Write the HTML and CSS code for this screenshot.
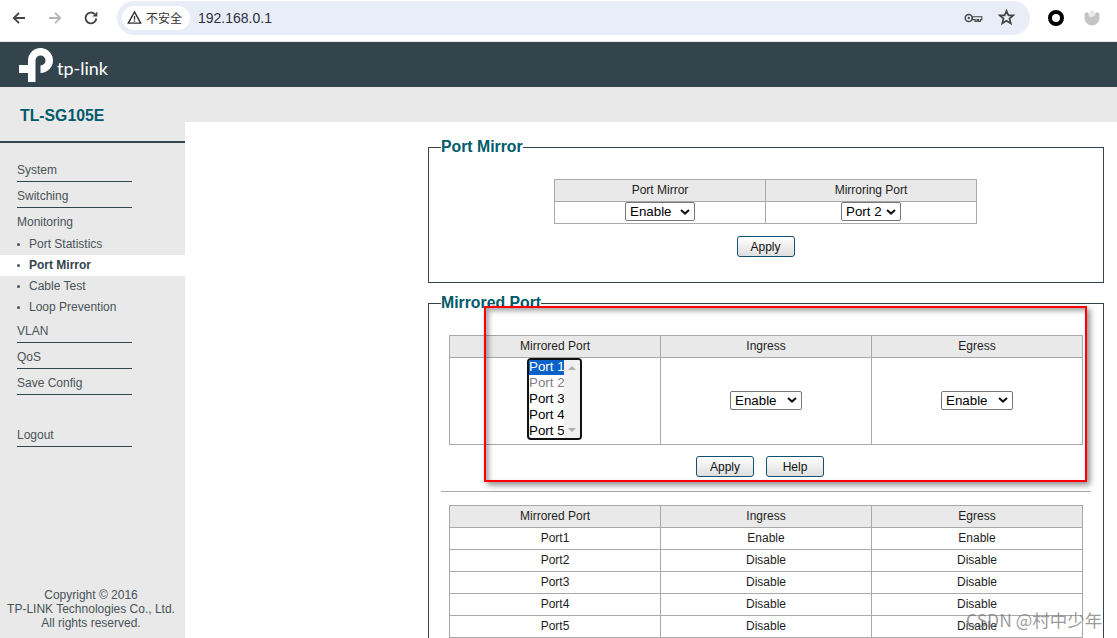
FILE: index.html
```html
<!DOCTYPE html>
<html lang="en">
<head>
<meta charset="utf-8">
<title>TL-SG105E</title>
<link rel="stylesheet" href="styles.css">
</head>
<body>
<div class="toolbar">
  <svg class="nav-icon" viewBox="0 0 16 16"><path d="M14 8H3.4M8 2.8 2.8 8 8 13.2" fill="none" stroke="#444" stroke-width="1.8"/></svg>
  <svg class="nav-icon" viewBox="0 0 16 16"><path d="M2 8h10.6M8 2.8 13.2 8 8 13.2" fill="none" stroke="#b5b5b5" stroke-width="1.8"/></svg>
  <svg class="nav-icon" viewBox="0 0 16 16"><path d="M13.3 8.4A5.4 5.4 0 1 1 11.6 4" fill="none" stroke="#444" stroke-width="1.9"/><path d="M9.4 6.6h5V1.6z" fill="#444"/></svg>
  <div class="omnibox">
    <div class="chip">
      <svg class="warn" viewBox="0 0 16 16"><path d="M8 2 14.6 14H1.4z" fill="none" stroke="#333" stroke-width="1.5"/><path d="M7.3 6.5h1.4v4H7.3zM7.3 11.2h1.4v1.4H7.3z" fill="#333"/></svg>
      <span>不安全</span>
    </div>
    <span class="url">192.168.0.1</span>
    <svg class="key" viewBox="0 0 20 12"><circle cx="5" cy="6" r="3.7" fill="none" stroke="#444" stroke-width="1.5"/><circle cx="5" cy="6" r="1.2" fill="#444"/><path d="M8.7 4.7h10v3h-1.5v2h-2v-2h-1.5v2h-2v-2H8.7z" fill="none" stroke="#444" stroke-width="1.2"/></svg>
    <svg class="star" viewBox="0 0 16 16"><path d="M8 1.8 9.8 6h4.6l-3.6 3 1.2 4.6L8 11.1l-4 2.5L5.2 9 1.6 6h4.6z" fill="none" stroke="#444" stroke-width="1.6"/></svg>
  </div>
  <div class="ext-ring"></div>
  <svg class="avatar" viewBox="0 0 16 16"><path d="M.5 3.5 3 2l2 1.4L8 .8l3 2.6L13 2l2.5 1.5V8a7.5 7.5 0 0 1-15 0z" fill="#c4c4c4"/><path d="M4 3.5 8 2l3.5 1.5L10 6.5 6 7z" fill="#ececec"/></svg>
</div>

<header class="brand">
  <svg class="logo" viewBox="0 0 34 34"><path d="M9 17V12.5A12.5 12.5 0 1 1 21.5 25V17.5A5 5 0 1 0 16.5 12.5V34H9V25H0V17z" fill="#fff"/></svg>
  <span class="wordmark">tp-link</span>
</header>

<div class="page">
  <nav class="sidebar">
    <h1 class="model">TL-SG105E</h1>
    <ul class="menu">
      <li class="item">System</li>
      <li class="item">Switching</li>
      <li class="item open">Monitoring</li>
      <li class="sub">Port Statistics</li>
      <li class="sub active">Port Mirror</li>
      <li class="sub">Cable Test</li>
      <li class="sub">Loop Prevention</li>
      <li class="item">VLAN</li>
      <li class="item">QoS</li>
      <li class="item">Save Config</li>
      <li class="item logout">Logout</li>
    </ul>
    <p class="copyright">Copyright © 2016<br>TP-LINK Technologies Co., Ltd.<br>All rights reserved.</p>
  </nav>

  <main class="content">
    <div class="band"></div>
    <div class="panels">
      <fieldset class="panel first">
        <legend>Port Mirror</legend>
        <table class="grid narrow">
          <tr><th>Port Mirror</th><th>Mirroring Port</th></tr>
          <tr><td><select class="pick"><option>Enable</option></select></td><td><select class="pick short"><option>Port 2</option></select></td></tr>
        </table>
        <div class="actions"><button class="btn">Apply</button></div>
      </fieldset>

      <fieldset class="panel second">
        <legend>Mirrored Port</legend>
        <table class="grid wide">
          <tr><th>Mirrored Port</th><th>Ingress</th><th>Egress</th></tr>
          <tr class="tall">
            <td class="list-cell">
              <div class="listbox">
                <div class="options">
                  <div class="opt selected">Port 1</div>
                  <div class="opt disabled">Port 2</div>
                  <div class="opt">Port 3</div>
                  <div class="opt">Port 4</div>
                  <div class="opt">Port 5</div>
                </div>
                <div class="scroll"><i class="up"></i><i class="down"></i></div>
              </div>
            </td>
            <td><select class="pick long"><option>Enable</option></select></td>
            <td><select class="pick long"><option>Enable</option></select></td>
          </tr>
        </table>
        <div class="actions two"><button class="btn">Apply</button><button class="btn">Help</button></div>
        <hr class="rule">
        <table class="grid wide">
          <tr><th>Mirrored Port</th><th>Ingress</th><th>Egress</th></tr>
          <tr><td>Port1</td><td>Enable</td><td>Enable</td></tr>
          <tr><td>Port2</td><td>Disable</td><td>Disable</td></tr>
          <tr><td>Port3</td><td>Disable</td><td>Disable</td></tr>
          <tr><td>Port4</td><td>Disable</td><td>Disable</td></tr>
          <tr><td>Port5</td><td>Disable</td><td>Disable</td></tr>
        </table>
      </fieldset>
    </div>
  </main>
</div>

<div class="annotation"></div>
<div class="watermark">CSDN @村中少年</div>
</body>
</html>
```
FILE: styles.css
```css
* { box-sizing: border-box; }
html, body { margin: 0; height: 638px; overflow: hidden; background: #fff; }
body { position: relative; font-family: "Liberation Sans", Arial, sans-serif; font-size: 12px; color: #222; }

.toolbar { height: 42px; display: flex; align-items: center; padding: 0 0 6px 11px; background: #fff; border-bottom: 1px solid #e6e6e6; }
.nav-icon { width: 16px; height: 16px; margin-right: 20px; }
.nav-icon:nth-child(3) { margin-right: 18px; }
.omnibox { width: 913px; height: 34px; border-radius: 17px; background: #e8edf7; display: flex; align-items: center; padding: 0 15px 0 5px; }
.chip { height: 24px; width: 68px; border-radius: 12px; background: #fff; display: flex; align-items: center; padding-left: 5px; gap: 4px; font: 12px "Noto Sans CJK SC", sans-serif; color: #333; }
.warn { width: 15px; height: 15px; }
.url { margin-left: 8px; font: 14px "Liberation Sans", sans-serif; color: #2f2f3f; flex: 1; }
.key { width: 19px; height: 12px; margin-right: 15px; }
.star { width: 17px; height: 17px; }
.ext-ring { width: 16px; height: 16px; margin-left: 18px; border: 4px solid #000; border-radius: 50%; }
.avatar { width: 16px; height: 16px; margin-left: 20px; }

.brand { height: 45px; background: #33444c; display: flex; align-items: center; padding-left: 19px; }
.logo { width: 34px; height: 34px; margin-top: 1px; }
.wordmark { margin-left: 4px; margin-top: 6px; font: 18px "Lato", sans-serif; color: #fff; }

.page { display: flex; height: 551px; overflow: hidden; }
.sidebar { width: 185px; flex: none; background: #e9e9e9; display: flex; flex-direction: column; }
.model { margin: 0; height: 56px; padding: 19px 0 0 20px; font-size: 15.8px; line-height: 19px; color: #005a6b; border-bottom: 2px solid #33444c; }
.menu { list-style: none; margin: 0; padding: 13px 0 0; }
.item { margin: 0 53px 0 17px; height: 26px; padding-top: 7px; line-height: 14px; color: #4a5258; border-bottom: 1px solid #33444c; }
.item.open { border-bottom: 0; }
.sub { height: 21px; line-height: 21px; padding-left: 29px; color: #4a5258; position: relative; }
.sub + .item { height: 25px; padding-top: 6px; }
.sub::before { content: ""; position: absolute; left: 17px; top: 9px; width: 3px; height: 3px; border-radius: 50%; background: #4a5258; }
.sub.active { background: #fff; font-weight: bold; color: #33444c; }
.item.logout { margin-top: 26px; }
.copyright { margin: auto 0 8px; width: 182px; text-align: center; line-height: 14px; color: #4a5258; }

.content { flex: 1; min-width: 0; overflow: hidden; }
.band { height: 35px; background: #e9e9e9; }
.panels { padding: 16px 13px 0 243px; }
.panel { margin: 0; min-width: 0; border: 1px solid #33444c; position: relative; }
.panel legend { padding: 0; font-size: 15.8px; font-weight: bold; line-height: 18px; color: #005a6b; }
.first { height: 145px; padding: 23px 13px 0 12px; margin-bottom: 11px; }
.second { height: 400px; padding: 23px 12px 0; }

.grid { border-collapse: collapse; table-layout: fixed; margin: 0 auto; }
.narrow { width: 423px; }
.wide { width: 634px; }
.grid th, .grid td { border: 1px solid #a9a9a9; height: 22px; padding: 0 0 2px; text-align: center; font-weight: normal; font-size: 12px; line-height: 14px; color: #1e1e1e; }
.grid th { background: #e9e9e9; }
.grid .tall td { height: 87px; padding: 0 0 2px; }
.grid .tall .list-cell { padding: 0 1px 0 0; vertical-align: top; }
.pick { appearance: none; width: 70px; height: 19px; padding: 0 0 0 4px; font: 13.33px "Liberation Sans", sans-serif; color: #000; border: 1px solid #767676; border-radius: 2px; display: block; margin: 0 auto; background: #fff url("data:image/svg+xml,%3Csvg xmlns='http://www.w3.org/2000/svg' viewBox='0 0 10 6'%3E%3Cpath d='M1 1l4 3.6L9 1' fill='none' stroke='%23111' stroke-width='2'/%3E%3C/svg%3E") no-repeat right 4px center / 10px 6px; }
.pick.short { width: 60px; }
.pick.long { width: 72px; }

.actions { display: flex; justify-content: center; gap: 12px; padding-top: 12px; }
.two { padding: 11px 12px 0 0; }
.btn { width: 58px; height: 21px; padding: 0; font: 12px "Liberation Sans", sans-serif; color: #111; background: linear-gradient(#fff, #dedede); border: 1px solid #14506f; border-radius: 3px; }
.rule { height: 0; border: 0; border-top: 1px solid #a9a9a9; margin: 14px 0 13px; }

.listbox { width: 55px; height: 82px; margin: 0 auto; border: 2px solid #111; border-radius: 4px; display: flex; overflow: hidden; background: #fff; text-align: left; }
.options { width: 35px; flex: none; margin-top: -1px; }
.opt { height: 16px; font-size: 13.33px; line-height: 16px; color: #000; white-space: nowrap; }
.opt.selected { background: #0a62c8; color: #fff; }
.opt.disabled { color: #808080; }
.scroll { flex: 1; background: #f1f1f1; display: flex; flex-direction: column; justify-content: space-between; align-items: center; padding: 6px 0; }
.up, .down { width: 0; height: 0; border-left: 4px solid transparent; border-right: 4px solid transparent; }
.up { border-bottom: 4px solid #b0b0b0; }
.down { border-top: 4px solid #b0b0b0; }

.annotation { position: absolute; left: 484px; top: 306px; width: 603px; height: 176px; border: 2px solid #f00; box-shadow: 3px 3px 6px rgba(0,0,0,.45), inset 3px 3px 5px rgba(0,0,0,.35); }
.watermark { position: absolute; left: 966px; top: 609px; font: 17.5px "Noto Sans CJK SC", sans-serif; line-height: 21px; color: rgba(110,110,110,.7); white-space: nowrap; }
```
